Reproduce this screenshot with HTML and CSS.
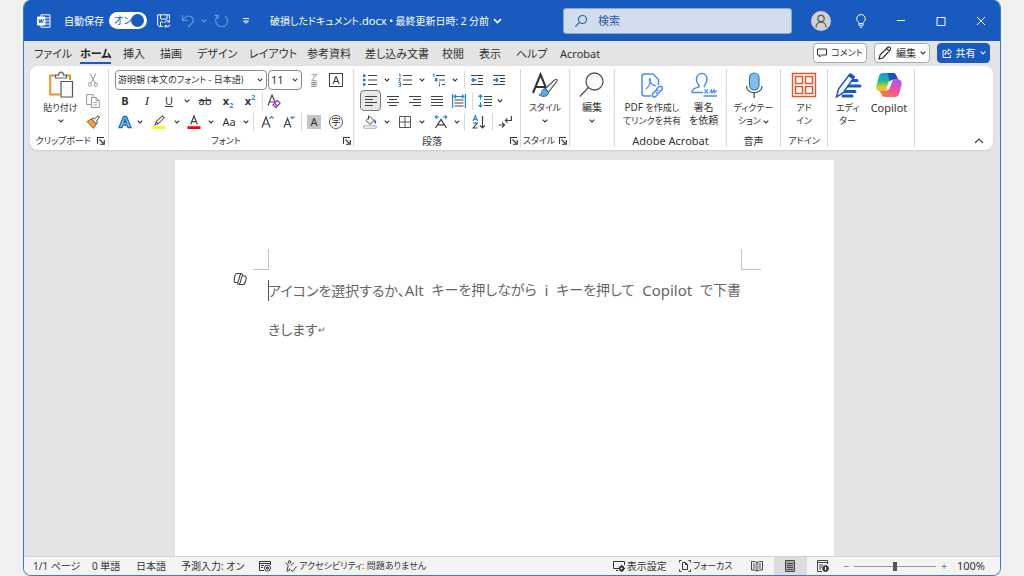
FILE: index.html
```html
<!DOCTYPE html>
<html lang="ja">
<head>
<meta charset="utf-8">
<meta name="viewport" content="width=device-width, initial-scale=1">
<title>破損したドキュメント.docx</title>
<link rel="stylesheet" href="styles.css">
</head>
<body>
<svg class="defs" aria-hidden="true">
  <symbol id="chev" viewBox="0 0 6 4"><path d="M.7.7 3 3 5.3.7" fill="none" stroke="currentColor" stroke-width="1.1"/></symbol>
  <symbol id="launch" viewBox="0 0 8 8"><path d="M.5 7V.5H7M2.5 2.5 6.5 6.5M7.3 3v4.3H3" fill="none" stroke="currentColor" stroke-width="1.1"/></symbol>
</svg>
<div class="window">
  <header class="titlebar">
    <div class="title-left">
      <svg class="i14" viewBox="0 0 14 14" fill="none" stroke="#fff"><path d="M4 3V.8h9v12.4H4V11M8 4h5M8 7h5M8 10h5" /><path d="M.5 3h7.3v8H.5z" fill="#fff"/><path d="m1.8 5 1.1 4 1.2-3.6L5.300 9l1.200-4" stroke="#185abd"/></svg>
      <label class="autosave" for="autosave">自動保存</label>
      <span class="switch"><input type="checkbox" id="autosave" role="switch" checked><span class="switch-text">オン</span></span>
      <button class="plain" aria-label="保存"><svg class="i14" viewBox="0 0 14 14" fill="none" stroke="#fff"><path d="M6 12.500H2L.7 11V.8h11.800V5M3.500 1v4h6.500V1M3.500 12V8H6"/><path d="M7.500 9a2.800 2.800 0 0 1 5-1.200V6M12.500 8h-2M13 10.500a2.800 2.800 0 0 1-5 1.200v1.800M8 11.500h2"/></svg></button>
      <button class="plain dim" aria-label="元に戻す"><svg class="i14" viewBox="0 0 14 14" fill="none" stroke="currentColor" stroke-width="1.200"><path d="M1.500 1v5.300h5.300M1.800 6C4.500 2 8 1 10.500 3s2.200 4.500.3 6.300L7 13"/></svg></button>
      <button class="plain dim" aria-label="元に戻すの一覧"><svg class="chev"><use href="#chev"/></svg></button>
      <button class="plain dim" aria-label="繰り返し"><svg class="i14" viewBox="0 0 14 14" fill="none" stroke="currentColor" stroke-width="1.200"><path d="M4 1.600a6 6 0 1 0 6.500.2M3.500 5V1.300H0" transform="translate(.5 0)"/></svg></button>
      <button class="plain" aria-label="クイック アクセスのカスタマイズ"><svg class="i8" viewBox="0 0 8 8" fill="none" stroke="#fff"><path d="M1 1.500h6M1.500 4 4 6.300 6.500 4z"/></svg></button>
    </div>
    <button class="plain doc-name"><span><span class="kana">破損したドキュメント</span><span class="latin">.docx</span> • 最終更新日時: 2 分前</span><svg class="chev big"><use href="#chev"/></svg></button>
    <label class="search">
      <svg class="i14" viewBox="0 0 14 14" fill="none" stroke="#2b5ca8" stroke-width="1.200"><circle cx="8.500" cy="5.500" r="4"/><path d="M5.600 8.400 1.300 12.700"/></svg>
      <input type="search" placeholder="検索" aria-label="検索">
    </label>
    <div class="title-right">
      <button class="avatar" aria-label="アカウント"><svg viewBox="0 0 20 20" fill="none" stroke="#555" stroke-width="1.200"><circle cx="10" cy="7.500" r="3.200"/><path d="M5 16.500c0-7 10-7 10 0"/></svg></button>
      <button class="plain" aria-label="ヒント"><svg class="i14" viewBox="0 0 14 14" fill="none" stroke="#fff"><path d="M5 9.500C5 8 2.700 7.500 2.700 4.800a4.300 4.300 0 0 1 8.600 0C11.300 7.500 9 8 9 9.500zM5.200 11.300h3.600M5.700 13.200h2.600M5 9.500v2M9 9.500v2"/></svg></button>
      <button class="plain" aria-label="最小化"><svg class="i10" viewBox="0 0 10 10"><path d="M1 4.500h8" stroke="#fff"/></svg></button>
      <button class="plain" aria-label="最大化"><svg class="i10" viewBox="0 0 10 10"><path d="M1 1.500h8v8H1z" stroke="#fff" fill="none"/></svg></button>
      <button class="plain" aria-label="閉じる"><svg class="i10" viewBox="0 0 10 10"><path d="m1 1 8 8M9 1 1 9" stroke="#fff"/></svg></button>
    </div>
  </header>

  <div class="tabbar">
    <nav class="tabs">
      <a href="#">ファイル</a><a href="#" class="active">ホーム</a><a href="#">挿入</a><a href="#">描画</a><a href="#">デザイン</a><a href="#">レイアウト</a><a href="#">参考資料</a><a href="#">差し込み文書</a><a href="#">校閲</a><a href="#">表示</a><a href="#">ヘルプ</a><a href="#">Acrobat</a>
    </nav>
    <div class="actions">
      <button class="pill"><svg class="i10" viewBox="0 0 10 10" fill="none" stroke="#333"><path d="M.5 1h9v6H4.500L2.500 9V7h-2z"/></svg><span class="kana">コメント</span></button>
      <button class="pill"><svg class="i14" viewBox="0 0 14 14" fill="none" stroke="#333" stroke-width="1.200"><path d="M1 13l1-4 7.500-7.500c1.800-1.500 4 .8 2.700 2.500L4.800 12zM8.500 2.500l3 3"/></svg>編集<svg class="chev"><use href="#chev"/></svg></button>
      <button class="pill share"><svg class="i10" viewBox="0 0 10 10" fill="none" stroke="#fff"><path d="M4 2.500H1v7h7.500V7M3 7c0-3 1.500-4 3.500-4V1l3 2.800-3 2.700V5C5 5 4 5.500 3 7z"/></svg>共有<svg class="chev"><use href="#chev"/></svg></button>
    </div>
  </div>

  <div class="ribbon">
    <section class="group clipboard">
      <div class="content">
        <button class="tool"><svg class="i26" viewBox="0 0 26 28" fill="none"><path d="M8 4.500H2.200v19h10M18 4.500h4V9" stroke="#e8912d" stroke-width="2"/><path d="M7.500 7V4.200h3c0-4.200 5-4.200 5 0h3V7z" stroke="#666" stroke-width="1.200" fill="#fff"/><path d="M13 10.500h11.500V26H13z" stroke="#555" stroke-width="1.200" fill="#fafafa"/></svg><span class="kana">貼り付け</span><svg class="chev"><use href="#chev"/></svg></button>
        <div class="stack">
          <button class="ib" aria-label="切り取り"><svg class="i14" viewBox="0 0 14 14" fill="none" stroke="#999"><path d="M4 .5 9 10M10 .5 5 10"/><circle cx="4" cy="11.500" r="1.700"/><circle cx="10" cy="11.500" r="1.700"/></svg></button>
          <button class="ib" aria-label="コピー"><svg class="i14" viewBox="0 0 14 14" fill="none" stroke="#999"><path d="M5 10.500H.6V.6H7V3"/><path d="M5.500 3.500H10l3.300 3v7H5.500zM10 3.500v3h3M7.500 8.500H11M7.500 11H11"/></svg></button>
          <button class="ib" aria-label="書式のコピー"><svg class="i14" viewBox="0 0 14 14"><path d="M1 6.500 5.500 4l5 5-3 4.500z" fill="#f4a04a" stroke="#c55a11"/><path d="m5.500 4 5 5 1-2-1-1L13.500 2 12 .8 8.300 4 7 2.800z" fill="#fff" stroke="#444"/></svg></button>
        </div>
      </div>
      <footer><span class="kana">クリップボード</span><button class="launch" aria-label="クリップボードの設定"><svg><use href="#launch"/></svg></button></footer>
    </section>

    <section class="group font">
      <div class="content rows">
        <div class="row f1">
          <select class="box" aria-label="フォント"><option>游明朝 (本文のフォント - 日本語)</option></select>
          <select class="box size" aria-label="サイズ"><option>11</option></select>
          <button class="ib ruby" aria-label="ルビ"><span>ア</span><span>亜</span></button>
          <button class="ib" aria-label="囲み線"><span class="boxed">A</span></button>
        </div>
        <div class="row f2">
          <button class="ib"><b>B</b></button><button class="ib serif"><i>I</i></button><button class="ib"><u>U</u></button><button class="ib" aria-label="下線の種類"><svg class="chev"><use href="#chev"/></svg></button>
          <button class="ib"><s>ab</s></button><button class="ib"><span><b>x</b><sub>2</sub></span></button><button class="ib"><span><b>x</b><sup>2</sup></span></button><i class="sep"></i>
          <button class="ib" aria-label="書式のクリア"><svg class="i14" viewBox="0 0 14 14" fill="none"><path d="M1 11.500 5 1l3.500 8M2.500 8H7" stroke="#444" stroke-width="1.200"/><path d="m6 11 4-4.500 3 2.500-4 4.500zM7.500 9.300l3 2.600" stroke="#9b3fb5" stroke-width="1.300"/></svg></button>
        </div>
        <div class="row f3">
          <button class="ib" aria-label="文字の効果"><svg class="i14" viewBox="0 0 14 14" fill="none" stroke="#1e6fb8" stroke-width="1.300"><path d="M1 12.500 5.500 1.500h3l4.500 11h-3L9 10H5l-1 2.500z" fill="#8cc6ef"/><path d="M5.800 7.500h2.500L7 4z" fill="#fff"/></svg></button><button class="ib" aria-label="文字の効果一覧"><svg class="chev"><use href="#chev"/></svg></button>
          <button class="ib" aria-label="蛍光ペン"><svg class="i14" viewBox="0 0 14 15"><path d="M0 12h14v3H0z" fill="#ff0"/><path d="M3 10.500 4 7l6.500-6 2 2L6 9.500zM4 7l2 2.500M2 11l2-1" fill="none" stroke="#555" stroke-width="1.100"/></svg></button><button class="ib" aria-label="蛍光ペンの色"><svg class="chev"><use href="#chev"/></svg></button>
          <button class="ib" aria-label="フォントの色"><svg class="i14" viewBox="0 0 14 15"><path d="M0 12h14v3H0z" fill="red"/><path d="M3.500 10 7 1l3.500 9M4.700 7h4.600" fill="none" stroke="#444" stroke-width="1.300"/></svg></button><button class="ib" aria-label="色の一覧"><svg class="chev"><use href="#chev"/></svg></button>
          <button class="ib">Aa</button><button class="ib" aria-label="文字種"><svg class="chev"><use href="#chev"/></svg></button><i class="sep"></i>
          <button class="ib" aria-label="拡大"><svg class="i14" viewBox="0 0 14 14" fill="none"><path d="M1 12.500 5 2l4 10.500M2.400 9h5.200" stroke="#444" stroke-width="1.200"/><path d="m8.500 3.500 2-2 2 2" stroke="#1e88d0" stroke-width="1.200"/></svg></button>
          <button class="ib" aria-label="縮小"><svg class="i14" viewBox="0 0 14 14" fill="none"><path d="M2 12.500 5.500 3.500 9 12.500M3.300 9.500h4.400" stroke="#444" stroke-width="1.200"/><path d="m8.500 1.500 2 2 2-2" stroke="#1e88d0" stroke-width="1.200"/></svg></button><i class="sep"></i>
          <button class="ib" aria-label="文字の網かけ"><span class="shade">A</span></button><button class="ib" aria-label="囲い文字"><span class="circled">字</span></button>
        </div>
      </div>
      <footer><span class="kana">フォント</span><button class="launch" aria-label="フォントの設定"><svg><use href="#launch"/></svg></button></footer>
    </section>

    <section class="group para">
      <div class="content rows">
        <div class="row p1">
          <button class="ib" aria-label="箇条書き"><svg class="i14" viewBox="0 0 14 14"><path d="M5 2.500h9M5 7h9M5 11.500h9" stroke="#444" stroke-width="1.200"/><path d="M0 1.500h2.500V4H0zM0 5.700h2.500v2.600H0zM0 10.200h2.500v2.600H0z" fill="#1e78c0"/></svg></button><button class="ib" aria-label="行頭文字"><svg class="chev"><use href="#chev"/></svg></button>
          <button class="ib" aria-label="段落番号"><svg class="i14" viewBox="0 0 14 14" fill="none"><path d="M5 2.500h9M5 7h9M5 11.500h9" stroke="#444" stroke-width="1.200"/><path d="M1 1h1v3M.5 5.500h2L.7 8h2M.5 9.700h2v3.600h-2M1 11.500h1.500" stroke="#1e78c0" stroke-width=".9"/></svg></button><button class="ib" aria-label="番号書式"><svg class="chev"><use href="#chev"/></svg></button>
          <button class="ib" aria-label="アウトライン"><svg class="i14" viewBox="0 0 14 14" fill="none"><path d="M4 2.500h9M7 7h6M10 11.500h3" stroke="#444" stroke-width="1.200"/><path d="M1 1h1v3M3 5.500h2V8H3V6.800h2M7.500 10.500v3M7.500 9v.8" stroke="#1e78c0"/></svg></button><button class="ib" aria-label="リスト"><svg class="chev"><use href="#chev"/></svg></button><i class="sep"></i>
          <button class="ib" aria-label="インデントを減らす"><svg class="i12" viewBox="0 0 12 12" fill="none"><path d="M0 1.500h12M7 4.500h5M7 7.500h5M0 10.500h12" stroke="#444" stroke-width="1.200"/><path d="M5.500 6H1M3 4 1 6l2 2" stroke="#1e78c0" stroke-width="1.400"/></svg></button>
          <button class="ib" aria-label="インデントを増やす"><svg class="i12" viewBox="0 0 12 12" fill="none"><path d="M0 1.500h12M7 4.500h5M7 7.500h5M0 10.500h12" stroke="#444" stroke-width="1.200"/><path d="M0 6h5M3 4l2 2-2 2" stroke="#1e78c0" stroke-width="1.400"/></svg></button>
        </div>
        <div class="row p2">
          <button class="ib on" aria-label="左揃え"><svg class="i12" viewBox="0 0 12 12"><path d="M0 1.500h12M0 4.500h8M0 7.500h12M0 10.500h8" stroke="#444" stroke-width="1.200"/></svg></button>
          <button class="ib" aria-label="中央揃え"><svg class="i12" viewBox="0 0 12 12"><path d="M0 1.500h12M2 4.500h8M0 7.500h12M2 10.500h8" stroke="#444" stroke-width="1.200"/></svg></button>
          <button class="ib" aria-label="右揃え"><svg class="i12" viewBox="0 0 12 12"><path d="M0 1.500h12M4 4.500h8M0 7.500h12M4 10.500h8" stroke="#444" stroke-width="1.200"/></svg></button>
          <button class="ib" aria-label="両端揃え"><svg class="i12" viewBox="0 0 12 12"><path d="M0 1.500h12M0 4.500h12M0 7.500h12M0 10.500h12" stroke="#444" stroke-width="1.200"/></svg></button>
          <button class="ib" aria-label="均等割り付け"><svg class="i14" viewBox="0 0 14 14" fill="none"><path d="M2.500 6h9M2.500 9h9M2.500 12h9" stroke="#444" stroke-width="1.200"/><path d="M.6 0v14M13.400 0v14M2 2.500h10M4 .8 2.200 2.500 4 4.200M10 .8l1.800 1.700L10 4.200" stroke="#1e88d0" stroke-width="1.200"/></svg></button><i class="sep"></i>
          <button class="ib" aria-label="行間"><svg class="i14" viewBox="0 0 14 14" fill="none"><path d="M6 2.500h8M6 5.500h8M6 8.500h8M6 11.500h8" stroke="#444" stroke-width="1.200"/><path d="M2.500 1v4.500M.5 3l2-2 2 2M2.500 8v5M.5 11l2 2 2-2" stroke="#1e88d0" stroke-width="1.200"/></svg></button><button class="ib" aria-label="行間の一覧"><svg class="chev"><use href="#chev"/></svg></button>
        </div>
        <div class="row p3">
          <button class="ib" aria-label="塗りつぶし"><svg class="i14" viewBox="0 0 14 14" fill="none"><path d="M.8 10.800h12.400v2.400H.8z" stroke="#aaa"/><path d="M3 5.500 7 1.500l4 4L7 9.300zM5.500.5v4" stroke="#444"/><path d="M11 4.500c3 1 2.500 3 1.500 4.500-1.500-1-1-2.500-1.500-4.500z" fill="#1e6fb8"/></svg></button><button class="ib" aria-label="塗りつぶしの色"><svg class="chev"><use href="#chev"/></svg></button>
          <button class="ib" aria-label="罫線"><svg class="i14" viewBox="0 0 14 14" fill="none" stroke="#555"><path d="M1.500 1.500h11v11h-11zM7 1.500v11M1.500 7h11"/></svg></button><button class="ib" aria-label="罫線の一覧"><svg class="chev"><use href="#chev"/></svg></button>
          <button class="ib" aria-label="拡張書式"><svg class="i14" viewBox="0 0 14 14" fill="none"><path d="M1.500 13 7 4.500l5.500 8.500M3.800 9.800h6.400" stroke="#444" stroke-width="1.300"/><path d="M5 2H1.200M3 .4 1.200 2 3 3.600M9 2h3.800M11 .4 12.800 2 11 3.600" stroke="#1e88d0" stroke-width="1.200"/></svg></button><button class="ib" aria-label="拡張書式の一覧"><svg class="chev"><use href="#chev"/></svg></button><i class="sep"></i>
          <button class="ib" aria-label="並べ替え"><svg class="i14" viewBox="0 0 14 14" fill="none" stroke-width="1.200"><path d="M1 6 3.300.8 5.600 6M1.700 4.500H5" stroke="#1e88d0"/><path d="M1.200 8h4l-4 5h4.300M10.500 1v12M8 10.500l2.500 2.500 2.500-2.500" stroke="#444"/></svg></button><i class="sep"></i>
          <button class="ib" aria-label="編集記号"><svg class="i14" viewBox="0 0 14 14" fill="none" stroke="#444" stroke-width="1.200"><path d="M13.400 1v4.500H7.500M9.500 3.300 7.300 5.500l2.200 2.200M.5 10h6M4 7.500 6.500 10 4 12.500"/></svg></button>
        </div>
      </div>
      <footer><span>段落</span><button class="launch" aria-label="段落の設定"><svg><use href="#launch"/></svg></button></footer>
    </section>

    <section class="group style">
      <div class="content"><button class="tool"><svg class="i26" viewBox="0 0 26 26"><path d="M1 21 8.500 2.500 14.500 17M3.800 15h9.500" fill="none" stroke="#333" stroke-width="2"/><path d="M13 17 22.500 8c2-1.500 3.500-.5 2 1.800L16.500 20z" fill="#fff" stroke="#555" stroke-width="1.200"/><path d="M13 17c-4-.5-2.500 5-6 6 4 2.500 10 1.500 9.500-3z" fill="#5aaee8" stroke="#1e6fb8"/></svg><span class="kana">スタイル</span><svg class="chev"><use href="#chev"/></svg></button></div>
      <footer><span class="kana">スタイル</span><button class="launch" aria-label="スタイルの設定"><svg><use href="#launch"/></svg></button></footer>
    </section>

    <section class="group edit">
      <div class="content"><button class="tool"><svg class="i26" viewBox="0 0 26 26" fill="none" stroke="#555" stroke-width="1.300"><circle cx="15.500" cy="9.500" r="8.500" fill="#fafafa"/><path d="M9.500 15.500.8 24.500"/></svg><span>編集</span><svg class="chev"><use href="#chev"/></svg></button></div>
      <footer></footer>
    </section>

    <section class="group acrobat">
      <div class="content">
        <button class="tool"><svg class="i26" viewBox="0 0 26 26" fill="none" stroke="#4a8cf5" stroke-width="1.500"><path d="M12 24H5.500Q3 24 3 21.500V4.500Q3 2 5.500 2H14l5.500 5.500V13"/><path d="M6.500 17c3-1 5.500-6.500 5-9.500-.5-2-2.500 0 0 3s4.500 3.500 5.500 3" stroke-width="1.200"/><path d="m17 17.500 2.500-2.500c2.500-2 5 .5 3 3l-2.500 2.500c-1.200 1-2.500.8-3.200 0M19.500 19c-1-1.200-2.500-.8-3.500.2l-2 2c-2 2.500.5 5 3 3l2-2"/></svg><span class="kana"><span class="latin">PDF</span> を作成し<br>てリンクを共有</span></button>
        <button class="tool"><svg class="i26" viewBox="0 0 26 26" fill="none" stroke="#4a8cf5" stroke-width="1.500"><path d="M12 20.500H1c0-4 3.500-4.500 6.500-5.500 2.500-1-2-2.500-2-7.500C5.500-.5 16-.5 16 7.500c0 5-4.500 6.500-2 7.500M12.500 24H26"/><path d="m13.500 17.500 3.500 4m0-4-3.500 4m5-.5 2-3 .5 3 2-3 .5 2.500 2-2" stroke-width="1.200"/></svg><span>署名<br>を依頼</span></button>
      </div>
      <footer><span class="latin">Adobe Acrobat</span></footer>
    </section>

    <section class="group voice">
      <div class="content"><button class="tool"><svg class="i26" viewBox="0 0 26 26" fill="none"><rect x="8.500" y="1" width="9.500" height="17" rx="4.700" fill="#83bdec" stroke="#2b7cc4" stroke-width="1.200"/><path d="M5.500 14c0 9 15.500 9 15.500 0M13.200 21v5" stroke="#555" stroke-width="1.300"/></svg><span class="kana">ディクテー<br>ション <svg class="chev"><use href="#chev"/></svg></span></button></div>
      <footer><span>音声</span></footer>
    </section>

    <section class="group addin">
      <div class="content"><button class="tool"><svg class="i26" viewBox="0 0 26 26" fill="none" stroke="#e0562d"><path d="M1.500 1.500h23v23h-23z" stroke-width="1.400"/><path d="M4.500 4.500h7v7h-7zM14.500 4.500h7v7h-7zM4.500 14.500h7v7h-7zM14.500 14.500h7v7h-7z" stroke-width="1.600"/></svg><span class="kana">アド<br>イン</span></button></div>
      <footer><span class="kana">アドイン</span></footer>
    </section>

    <section class="group editor">
      <div class="content">
        <button class="tool"><svg class="i26" viewBox="0 0 26 26"><path d="M13 8.500h9M11 14h14M9 19.500h11M8 24h9" stroke="#185abd" stroke-width="3" stroke-linecap="round"/><path d="m1.500 25 2-8L14.500 2.500l4.500 3L8 21z" fill="#fff" stroke="#185abd" stroke-width="1.500"/><path d="m13 4 2.300-3 4.700 3.300-2.300 3z" fill="#185abd"/></svg><span class="kana">エディ<br>ター</span></button>
        <button class="tool"><svg class="i26" viewBox="0 0 26 26"><defs>
          <linearGradient id="ca" x1="0" y1="0" x2="0" y2="1"><stop offset="0" stop-color="#159bea"/><stop offset=".45" stop-color="#25b98b"/><stop offset=".8" stop-color="#d9d421"/><stop offset="1" stop-color="#f7b51a"/></linearGradient>
          <linearGradient id="cb" x1=".8" y1="0" x2=".2" y2="1"><stop offset="0" stop-color="#a35cf4"/><stop offset=".5" stop-color="#f0529a"/><stop offset="1" stop-color="#fb7b3c"/></linearGradient></defs>
          <path d="M7 1h10.500c3 0 3 5 5 6.500h-5c-2.500 0-3.500 1.500-4.500 4.500L11.500 17c-.5 1.500-1.500 2-3 2H4C-.5 19 0 15 1 11.500L3 4c.7-2 2-3 4-3z" fill="url(#ca)"/><path d="M11.500 1h6c3 0 3 5 5 6.500h-5c-2 0-3 .7-3.700 2z" fill="#1b4fc4"/><path d="M19 25H8.500c-3 0-3-4.500-5-6h5c2.500 0 3.500-2 4-4.500l1.500-4C14.700 8.500 15.700 7.500 17 7.500h5c4.500 0 4 4 3 7.500L23 22c-.7 2-2 3-4 3z" fill="url(#cb)"/><path d="m12.800 9.500 4-1.500-3.600 9.500-3.200 1z" fill="#fff"/></svg><span class="latin">Copilot</span></button>
      </div>
      <footer></footer>
    </section>
    <button class="collapse" aria-label="リボンを折りたたむ"><svg viewBox="0 0 10 6"><path d="m1 5 4-4 4 4" fill="none" stroke="#444" stroke-width="1.200"/></svg></button>
  </div>

  <main class="workspace">
    <article class="page">
      <div class="crops"><i></i><i></i></div>
      <button class="copilot-mark" aria-label="Copilot"><svg viewBox="0 0 14 14" fill="none" stroke="#444" stroke-width="1.100"><path d="M4 1.500h4c2 0 1 2.500 2.500 2.500M4 1.500C1.500 1.500.5 10 2 10.500h2.500M8 2C6 3 6 10 4.500 10.500c0 1 .5 2 1.500 2h4c2.500 0 4.500-8.500 2-8.500H9.500C8 4.500 8 10 6.500 12"/></svg></button>
      <p class="text"><span class="caret"></span><span>アイコンを選択するか、<span class="alnum">Alt</span></span> <span>キーを押しながら</span> <span class="alnum">i</span> <span>キーを押して</span> <span class="alnum">Copilot</span> <span>で下書</span></p>
      <p class="text">きします<span class="ret">↵</span></p>
    </article>
  </main>

  <footer class="status">
    <div class="status-left">
      <span>1/1 ページ</span><span>0 単語</span><span>日本語</span><span>予測入力: オン</span>
      <svg class="i12" viewBox="0 0 12 12" fill="none" stroke="#333"><path d="M5 10.500H.5v-9h11V5M.5 3.500h11M2 5.500h3M2 7.500h2"/><circle cx="8.500" cy="8" r="3"/><circle cx="8.500" cy="8" r="1" fill="#333"/></svg>
      <span class="with-icon"><svg class="i12" viewBox="0 0 12 12" fill="none" stroke="#333"><circle cx="4.500" cy="2" r="1.300"/><path d="M.7 2.500c0 1.500 2.500 1.500 2.500 3L2 10.500c0 1.500 1.500 1 2-.5l.5-1.500M8.500 2.500C8.500 4 6 4 6 5.500M5.500 9.500l2 2 4-5"/></svg><span class="kana">アクセシビリティ: 問題ありません</span></span>
    </div>
    <div class="status-right">
      <button class="plain with-icon"><svg class="i12" viewBox="0 0 12 12" fill="none" stroke="#333"><path d="M5 8.500H.5v-7h11V5M3 10.500h2"/><circle cx="8.500" cy="8.500" r="2" stroke-width="1.800"/><path d="M8.500 5v1M8.500 11v1M5 8.500h1M11 8.500h1"/></svg>表示設定</button>
      <button class="plain with-icon"><svg class="i12" viewBox="0 0 12 12" fill="none" stroke="#333"><path d="M2.500.5h-2v2M.5 9.500v2h2M9.500.5h2v2M11.500 9.500v2h-2M3.500 2.500h3l2 2v5h-5zM6.500 2.500v2h2"/></svg><span class="kana">フォーカス</span></button>
      <button class="view" aria-label="閲覧モード"><svg class="i12" viewBox="0 0 12 12" fill="none" stroke="#444"><path d="M6 2.500Q3.500 1 .5 1.500V10Q3.500 9.500 6 11q2.500-1.500 5.500-1V1.500Q8.500 1 6 2.500V11M2 4h2.500M2 6h2.500M2 8h2.500M7.500 4H10M7.500 6H10M7.500 8H10"/></svg></button>
      <button class="view current" aria-label="印刷レイアウト"><svg class="i12" viewBox="0 0 12 12" fill="#aaa" stroke="#444"><path d="M1.500.5h9v11h-9zM3 3.500h6M3 5.500h6M3 7.500h6M3 9.500h6"/></svg></button>
      <button class="view" aria-label="Web レイアウト"><svg class="i12" viewBox="0 0 12 12" fill="none" stroke="#444"><path d="M5 11.500H.5V.5h10V4M.5 2.500h10M2 5h4M2 7h3M2 9h2"/><circle cx="8.500" cy="8.500" r="3" fill="#444"/><path d="M8.500 7v3" stroke="#fff"/></svg></button>
      <div class="zoom"><button class="plain" aria-label="縮小">−</button><input type="range" min="0" max="100" value="50" aria-label="ズーム"><button class="plain" aria-label="拡大">+</button></div>
      <span class="latin">100%</span>
    </div>
  </footer>
</div>
</body>
</html>
```
FILE: styles.css
```css
* { box-sizing: border-box; }
html, body { height: 100%; }
body {
  margin: 0;
  background: #f1f1f1;
  color: #333;
  font: 10px/14px "Noto Sans", "Noto Sans CJK JP", sans-serif;
  font-feature-settings: "palt";
}
button, input, select { font: inherit; font-feature-settings: inherit; color: inherit; }
button { padding: 0; border: 0; background: none; white-space: nowrap; }
svg { display: block; flex: none; overflow: visible; }
.defs { position: absolute; width: 0; height: 0; }
.i8 { width: 8px; height: 8px; }
.i10 { width: 10px; height: 10px; }
.i12 { width: 12px; height: 12px; }
.i14 { width: 14px; height: 14px; }
.i26 { width: 26px; height: 28px; }
.chev { width: 6px; height: 4px; }
.chev.big { width: 9px; height: 6px; }
.latin { font-size: 11px; }
.kana { font-size: 9px; }
.kana .latin { font-size: 10px; }

.window {
  display: flex;
  flex-direction: column;
  height: 100vh;
  margin: 0 23px;
  border: 1px solid #3a78d0;
  border-top: 0;
  border-radius: 8px;
  overflow: hidden;
  background: #e4e4e4;
}

/* Title bar */
.titlebar {
  display: grid;
  grid-template-columns: 246px 1fr minmax(120px, 229px) 208px;
  align-items: center;
  height: 41px;
  flex: none;
  background: #185abd;
  color: #fff;
}
.plain { display: flex; align-items: center; justify-content: center; gap: 4px; }
.title-left {
  display: grid;
  grid-template-columns: 27px 45px 44px 22px 26px 6px 28px 22px;
  align-items: center;
  padding-left: 13px;
}
.title-left .plain { width: 100%; }
.dim { color: #6a98da; }
.switch { position: relative; display: block; width: 38px; height: 17px; }
.switch input { appearance: none; display: flex; align-items: center; justify-content: flex-end; width: 100%; height: 100%; margin: 0; padding-right: 3px; border-radius: 9px; background: #fff; }
.switch input::after { content: ""; width: 13px; height: 13px; border-radius: 50%; background: #185abd; }
.switch-text { position: absolute; left: 5px; top: 1px; color: #185abd; pointer-events: none; }
.doc-name { justify-self: start; }
.doc-name .kana { font-size: 10px; }
.doc-name .latin { font-size: 11px; }
.doc-name > span { display: block; }
.search { display: flex; align-items: center; gap: 10px; height: 26px; padding: 0 10px; border: 1px solid #8ea6cc; border-radius: 3px; background: #d1dded; color: #2b5ca8; }
.search input { flex: 1; min-width: 0; padding: 0; border: 0; outline: 0; background: none; font-size: 11px; }
.search input::placeholder { color: #2b5ca8; }
.title-right { display: grid; grid-template-columns: 20px 20px 20px 20px 20px; gap: 20px; padding-left: 19px; }
.title-right .plain { height: 20px; }
.avatar { width: 20px; height: 20px; border-radius: 50%; background: #d0d0d0; }

/* Tabs */
.tabbar { display: flex; justify-content: space-between; flex: none; height: 25px; padding: 0 10px; }
.tabs { display: grid; grid-template-columns: 46px 43px 37px 37px 52px 58px 58px 77px 37px 37px 44px 60px; font-size: 11px; line-height: 20px; padding-top: 3px; white-space: nowrap; }
.tabs a { justify-self: start; height: 20px; color: #333; text-decoration: none; }
.tabs .active { font-weight: 700; border-bottom: 2px solid #185abd; color: #222; }
.actions { display: flex; gap: 7px; padding-top: 2px; }
.pill { display: flex; align-items: center; justify-content: center; gap: 4px; width: 56px; height: 20px; border: 1px solid #aaa; border-radius: 4px; background: #fdfdfd; }
.pill:first-child { width: 54px; }
.share { width: 53px; border-color: #185abd; background: #185abd; color: #fff; }

/* Ribbon */
.ribbon { display: flex; flex: none; height: 84px; margin: 0 7px 0 6px; border-radius: 8px; background: #fff; box-shadow: 0 1px 2px #ccc; }
.group { display: flex; flex-direction: column; flex: none; padding-top: 3px; border-right: 1px solid #ddd; border-image: linear-gradient(transparent 5%, #d8d8d8 5%, #d8d8d8 95%, transparent 95%) 1; }
.content { display: flex; justify-content: center; flex: 1; }
.group footer { display: flex; align-items: center; justify-content: center; height: 18px; white-space: nowrap; }
.clipboard { width: 79px; }
.font { width: 245px; }
.para { width: 167px; }
.style { width: 49px; }
.edit { width: 45px; }
.acrobat { width: 112px; }
.voice { width: 54px; }
.addin { width: 47px; }
.editor { width: 87px; }
.launch { width: 8px; height: 8px; }
.launch svg { width: 8px; height: 8px; }
.style footer { gap: 4px; }
.clipboard footer { justify-content: flex-end; gap: 6px; padding-right: 3px; }
.font footer, .para footer { padding: 0 2px 0 0; }
.font footer span, .para footer span { flex: 1; text-align: center; }
.tool { display: flex; flex-direction: column; align-items: center; gap: 2px; padding-top: 2px; line-height: 13px; }
.tool .chev { display: inline-block; margin-top: 3px; vertical-align: middle; }
.tool span .chev { margin: 0; }
.acrobat .content { gap: 8px; }
.editor .content { gap: 10px; }
.clipboard .content { gap: 8px; padding-left: 5px; }
.stack { display: grid; grid-auto-rows: 21px; }
.ib { display: flex; align-items: center; justify-content: center; min-width: 0; height: 21px; font-size: 11px; }
.ib sub, .ib sup { color: #1e88d0; font-size: 7px; font-weight: 700; line-height: 0; }
.serif { font-family: "Liberation Serif", serif; font-size: 13px; }
.on { border: 1px solid #777; border-radius: 4px; background: #e8e8e8; }
.rows { flex-direction: column; justify-content: flex-start; padding-left: 6px; }
.row { display: grid; grid-auto-rows: 21px; align-items: center; }
.f1 { grid-template-columns: 153px 35px 22px 22px; }
.f2 { grid-template-columns: 20px 24px 20px 16px 20px 26px 18px 6px 18px; }
.f3 { grid-template-columns: 20px 10px 28px 8px 26px 8px 28px 5px 10px 20px 21px 4px 22px 22px; }
.p1 { grid-template-columns: 20px 14px 22px 12px 22px 9px 11px 14px 30px; }
.p2 { grid-template-columns: 21px 23px 22px 22px 22px 4px 22px 8px; }
.p3 { grid-template-columns: 20px 14px 22px 12px 26px 6px 8px 22px 4px 22px; }
.sep { justify-self: center; width: 1px; height: 18px; background: #d8d8d8; }
.box {
  appearance: none; height: 20px; margin-right: 1px; padding: 0 9px 0 2px; border: 1px solid #888; border-radius: 4px; font-size: 9px;
  background: #fff url("data:image/svg+xml,%3Csvg xmlns='http://www.w3.org/2000/svg' viewBox='0 0 6 4'%3E%3Cpath d='M.7.7 3 3 5.3.7' fill='none' stroke='%23444' stroke-width='1.100'/%3E%3C/svg%3E") right 3px center / 6px 4px no-repeat;
}
.size { font-size: 11px; }
.ruby { flex-direction: column; font-size: 7px; line-height: 7px; color: #777; }
.boxed { width: 14px; height: 14px; border: 1px solid #444; line-height: 12px; }
.shade { width: 14px; height: 14px; background: #c4c4c4; line-height: 14px; }
.circled { width: 14px; height: 14px; border: 1px solid #555; border-radius: 50%; font-size: 9px; line-height: 12px; }
.collapse { align-self: flex-end; margin: 0 9px 6px auto; }
.collapse svg { width: 10px; height: 6px; }

/* Document */
.workspace { flex: 1; min-height: 0; overflow: hidden; padding: 10px 166px 0 151px; }
.page { position: relative; height: 100%; padding: 89px 73px 0 78px; background: #fff; }
.crops { display: flex; justify-content: space-between; height: 21px; }
.crops i { width: 16px; height: 21px; border: solid #c4c4c4; border-width: 0 1px 1px 0; }
.crops i:last-child { width: 20px; border-width: 0 0 1px 1px; }
.copilot-mark { position: absolute; left: 58px; top: 112px; }
.copilot-mark svg { width: 14px; height: 14px; }
.text { display: flex; justify-content: space-between; align-items: center; height: 40px; margin: 0 20px 0 15px; color: #666; font-size: 14px; line-height: 22px; white-space: nowrap; }
.text:last-child { justify-content: flex-start; }
.alnum { font-size: 15px; }
.caret { position: absolute; width: 1px; height: 21px; background: #555; }
.ret { font-size: 9px; }

/* Status bar */
.status { display: flex; justify-content: space-between; flex: none; height: 19px; border-top: 1px solid #d4d4d4; background: #f4f4f4; white-space: nowrap; }
.status-left { display: grid; grid-template-columns: 59px 44px 45px 78px 26px auto; align-items: center; padding-left: 9px; }
.with-icon { display: flex; align-items: center; gap: 2px; }
.status-right { display: flex; align-items: center; padding-right: 15px; }
.status-right .with-icon { margin-right: 12px; }
.status-right .with-icon + .with-icon { margin-right: 8px; }
.view { display: flex; align-items: center; justify-content: center; width: 33px; height: 18px; }
.current { background: #dcdcdc; }
.zoom { display: flex; align-items: center; gap: 5px; margin: 0 10px 0 4px; color: #777; }
.zoom input { appearance: none; width: 82px; height: 10px; margin: 0; background: linear-gradient(#999, #999) center / 100% 1px no-repeat; }
.zoom input::-webkit-slider-thumb { appearance: none; width: 4px; height: 9px; background: #555; }
```
